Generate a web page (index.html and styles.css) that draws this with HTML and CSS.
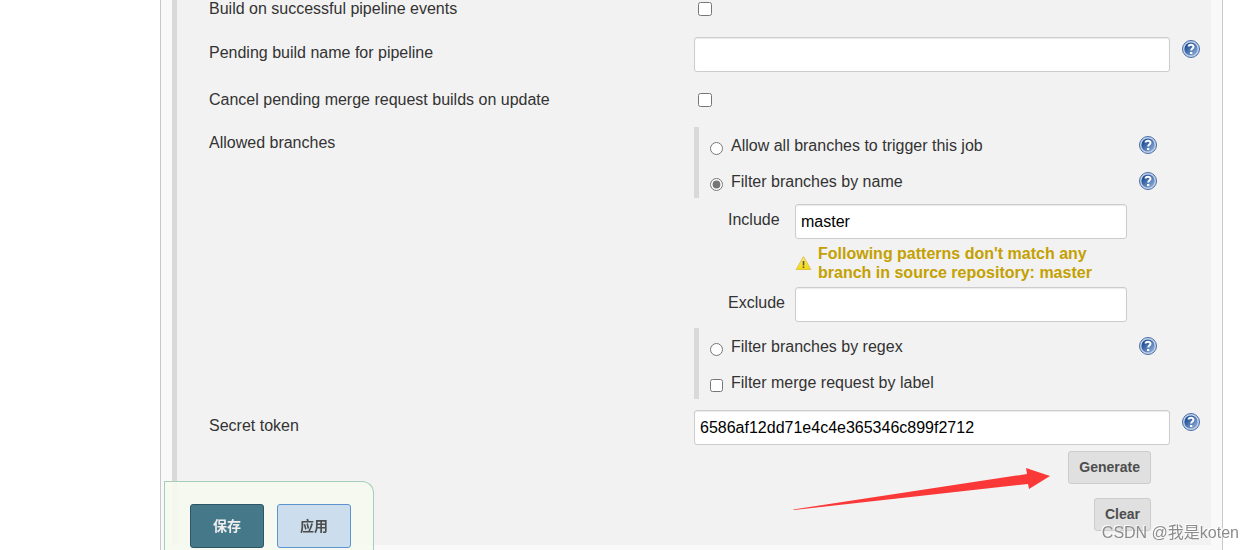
FILE: index.html
```
<!DOCTYPE html>
<html lang="zh-CN">
<head>
    <meta charset="UTF-8">
    <meta name="viewport" content="width=device-width, initial-scale=1.0">
    <title>Config</title>
    <link rel="stylesheet" href="styles.css">
</head>
<body>
    <svg class="defs" aria-hidden="true">
        <defs>
            <linearGradient id="blue" x1="0" y1="0" x2="1" y2="1">
                <stop offset="0.2" stop-color="#1f4f96"/>
                <stop offset="0.9" stop-color="#8aabd8"/>
            </linearGradient>
            <linearGradient id="yellow" x1="0" y1="0" x2="0" y2="1">
                <stop offset="0" stop-color="#fbe98a"/>
                <stop offset="1" stop-color="#f2d90c"/>
            </linearGradient>
        </defs>
        <symbol id="help" viewBox="0 0 18 18">
            <circle cx="9" cy="9" r="8.5" fill="#c3d3ea" stroke="#4a6da5"/>
            <circle cx="9" cy="9" r="6.6" fill="url(#blue)"/>
            <path d="M6.6 6.6C6.6 4.3 11.5 4.2 11.5 6.7C11.5 8.6 9.2 8.4 9.2 10.5" fill="none" stroke="#fff" stroke-width="2"/>
            <rect x="8" y="12" width="2.3" height="2" fill="#fff"/>
        </symbol>
    </svg>

    <div class="panel">
        <form class="section" id="config">
            <div class="row row-first">
                <label class="name" for="success">Build on successful pipeline events</label>
                <div class="setting"><input class="check" type="checkbox" id="success"></div>
            </div>
            <div class="row">
                <label class="name name-pad" for="pending">Pending build name for pipeline</label>
                <div class="setting"><input class="text" type="text" id="pending"></div>
                <a class="help" href="#" aria-label="Help"><svg><use href="#help"/></svg></a>
            </div>
            <div class="row row-cancel">
                <label class="name" for="cancel">Cancel pending merge request builds on update</label>
                <div class="setting"><input class="check" type="checkbox" id="cancel"></div>
            </div>
            <div class="row">
                <span class="name name-pad">Allowed branches</span>
                <div class="setting">
                    <div class="group">
                        <div class="option">
                            <input type="radio" name="branch" id="all">
                            <label for="all">Allow all branches to trigger this job</label>
                            <a class="help" href="#" aria-label="Help"><svg><use href="#help"/></svg></a>
                        </div>
                        <div class="option">
                            <input type="radio" name="branch" id="byname" checked>
                            <label for="byname">Filter branches by name</label>
                            <a class="help" href="#" aria-label="Help"><svg><use href="#help"/></svg></a>
                        </div>
                    </div>
                    <div class="nested">
                        <label for="include">Include</label>
                        <input class="text" type="text" id="include" value="master">
                        <p class="warning">
                            <svg viewBox="0 0 16 16">
                                <path d="M8 1.5L15.3 14.5H0.7Z" fill="url(#yellow)" stroke="#dfc44a" stroke-linejoin="round"/>
                                <path d="M8 6V10.5M8 11.5V13" stroke="#5f5522" stroke-width="1.6"/>
                            </svg>
                            <span>Following patterns don't match any branch in source repository: master</span>
                        </p>
                        <label for="exclude">Exclude</label>
                        <input class="text" type="text" id="exclude">
                    </div>
                    <div class="group">
                        <div class="option">
                            <input type="radio" name="branch" id="regex">
                            <label for="regex">Filter branches by regex</label>
                            <a class="help" href="#" aria-label="Help"><svg><use href="#help"/></svg></a>
                        </div>
                        <div class="option">
                            <input type="checkbox" id="bylabel">
                            <label for="bylabel">Filter merge request by label</label>
                        </div>
                    </div>
                </div>
            </div>
            <div class="row row-last">
                <label class="name name-pad" for="token">Secret token</label>
                <div class="setting">
                    <input class="text" type="text" id="token" value="6586af12dd71e4c4e365346c899f2712">
                    <div class="actions">
                        <button class="btn" type="button">Generate</button>
                        <button class="btn" type="button">Clear</button>
                    </div>
                    <svg class="arrow" viewBox="0 0 257 22" aria-hidden="true">
                        <path d="M0 41.5L234 6L233 0L257 8L236 21L235 16L1 42Z" fill="#fb3838"/>
                    </svg>
                </div>
                <a class="help" href="#" aria-label="Help"><svg><use href="#help"/></svg></a>
            </div>
        </form>
    </div>

    <div class="bottom-bar">
        <button class="save" type="submit" form="config">保存</button>
        <button class="apply" type="button">应用</button>
    </div>
    <div class="watermark">CSDN @我是koten</div>
</body>
</html>
```
FILE: styles.css
```
*{
    margin: 0;
    padding: 0;
    box-sizing: border-box;
}
body{
    background-color: #fff;
    color: #333;
    font: 16px/18px "Liberation Sans", "Noto Sans CJK SC", sans-serif;
}
button, input{
    font-family: inherit;
}
input{
    accent-color: #767676;
}
.defs{
    position: absolute;
    width: 0;
    height: 0;
}
.panel{
    min-height: 100vh;
    margin: 0 30px 0 160px;
    padding: 0 11px;
    background-color: #f9f9f9;
    border-left: 1px solid #c8c8c8;
    border-right: 1px solid #c8c8c8;
}
.section{
    display: flex;
    flex-direction: column;
    gap: 18px;
    padding: 0 0 14px 32px;
    background-color: #f2f2f2;
    border-left: 5px solid #d9d9d9;
}
.row{
    display: grid;
    grid-template-columns: 485fr 476fr 41px;
    align-items: start;
}
.row-first{
    height: 19px;
}
.row-cancel{
    padding-top: 1px;
}
.row-last{
    margin-top: -7px;
}
.name-pad{
    padding-top: 7px;
}
.setting{
    position: relative;
}
.check{
    display: block;
    width: 14px;
    height: 14px;
    margin: 2px 4px;
}
.text{
    display: block;
    width: 100%;
    height: 35px;
    padding: 0 5px;
    font-size: 16px;
    color: #000;
    background-color: #fff;
    border: 1px solid #ccc;
    border-radius: 3px;
    box-shadow: inset 0 1px 1px rgba(0, 0, 0, 0.08);
}
.help{
    margin: 3px 0 0 12px;
}
.help svg{
    display: block;
    width: 18px;
    height: 18px;
}
.group{
    display: grid;
    gap: 1px;
    padding-left: 11px;
    border-left: 5px solid #d9d9d9;
}
.option{
    display: flex;
    align-items: center;
    gap: 8px;
    height: 35px;
}
.option input{
    width: 13px;
    height: 13px;
    margin-top: 8px;
}
.option label{
    padding-top: 2px;
}
.option .help{
    margin: 0 13px 0 auto;
}
.nested{
    display: grid;
    grid-template-columns: 67px 1fr;
    padding: 6px 43px 6px 34px;
}
.nested label{
    padding-top: 7px;
}
.warning{
    grid-column: 2;
    display: flex;
    align-items: center;
    gap: 6px;
    padding: 5px 0;
    line-height: 19px;
    font-weight: bold;
    color: #c4a000;
}
.warning svg{
    flex: none;
    width: 17px;
    height: 16px;
}
.actions{
    display: flex;
    flex-direction: column;
    align-items: flex-end;
    gap: 14px;
    padding: 6px 19px 0 0;
}
.btn{
    height: 33px;
    padding: 0 10px 2px;
    font-size: 14px;
    font-weight: bold;
    color: #4d4d4d;
    background-color: #e0e0e0;
    border: 1px solid #ccc;
    border-radius: 3px;
}
/* red arrow pointing at Generate */
.arrow{
    position: absolute;
    right: 120px;
    top: 58px;
    width: 257px;
    height: 22px;
    overflow: visible;
}
.bottom-bar{
    position: fixed;
    left: 164px;
    bottom: 0;
    display: flex;
    gap: 13px;
    padding: 22px 22px 2px 25px;
    background-color: rgba(245, 249, 239, 0.9);
    border: 1px solid #a5cdb8;
    border-bottom: none;
    border-radius: 0 12px 0 0;
}
.bottom-bar button{
    width: 74px;
    height: 44px;
    padding-bottom: 3px;
    font-size: 14px;
    font-weight: bold;
    border-radius: 3px;
}
.bottom-bar .save{
    color: #eee;
    background-color: #457888;
    border: 1px solid #2d5565;
}
.bottom-bar .apply{
    color: #4d4d4d;
    background-color: #ccdded;
    border: 1px solid #5c94d0;
}
.watermark{
    position: fixed;
    right: 14px;
    bottom: 7px;
    font-size: 16px;
    line-height: 20px;
    color: #8c8c8c;
    text-shadow: -1px -1px 0 #fff;
}
```
